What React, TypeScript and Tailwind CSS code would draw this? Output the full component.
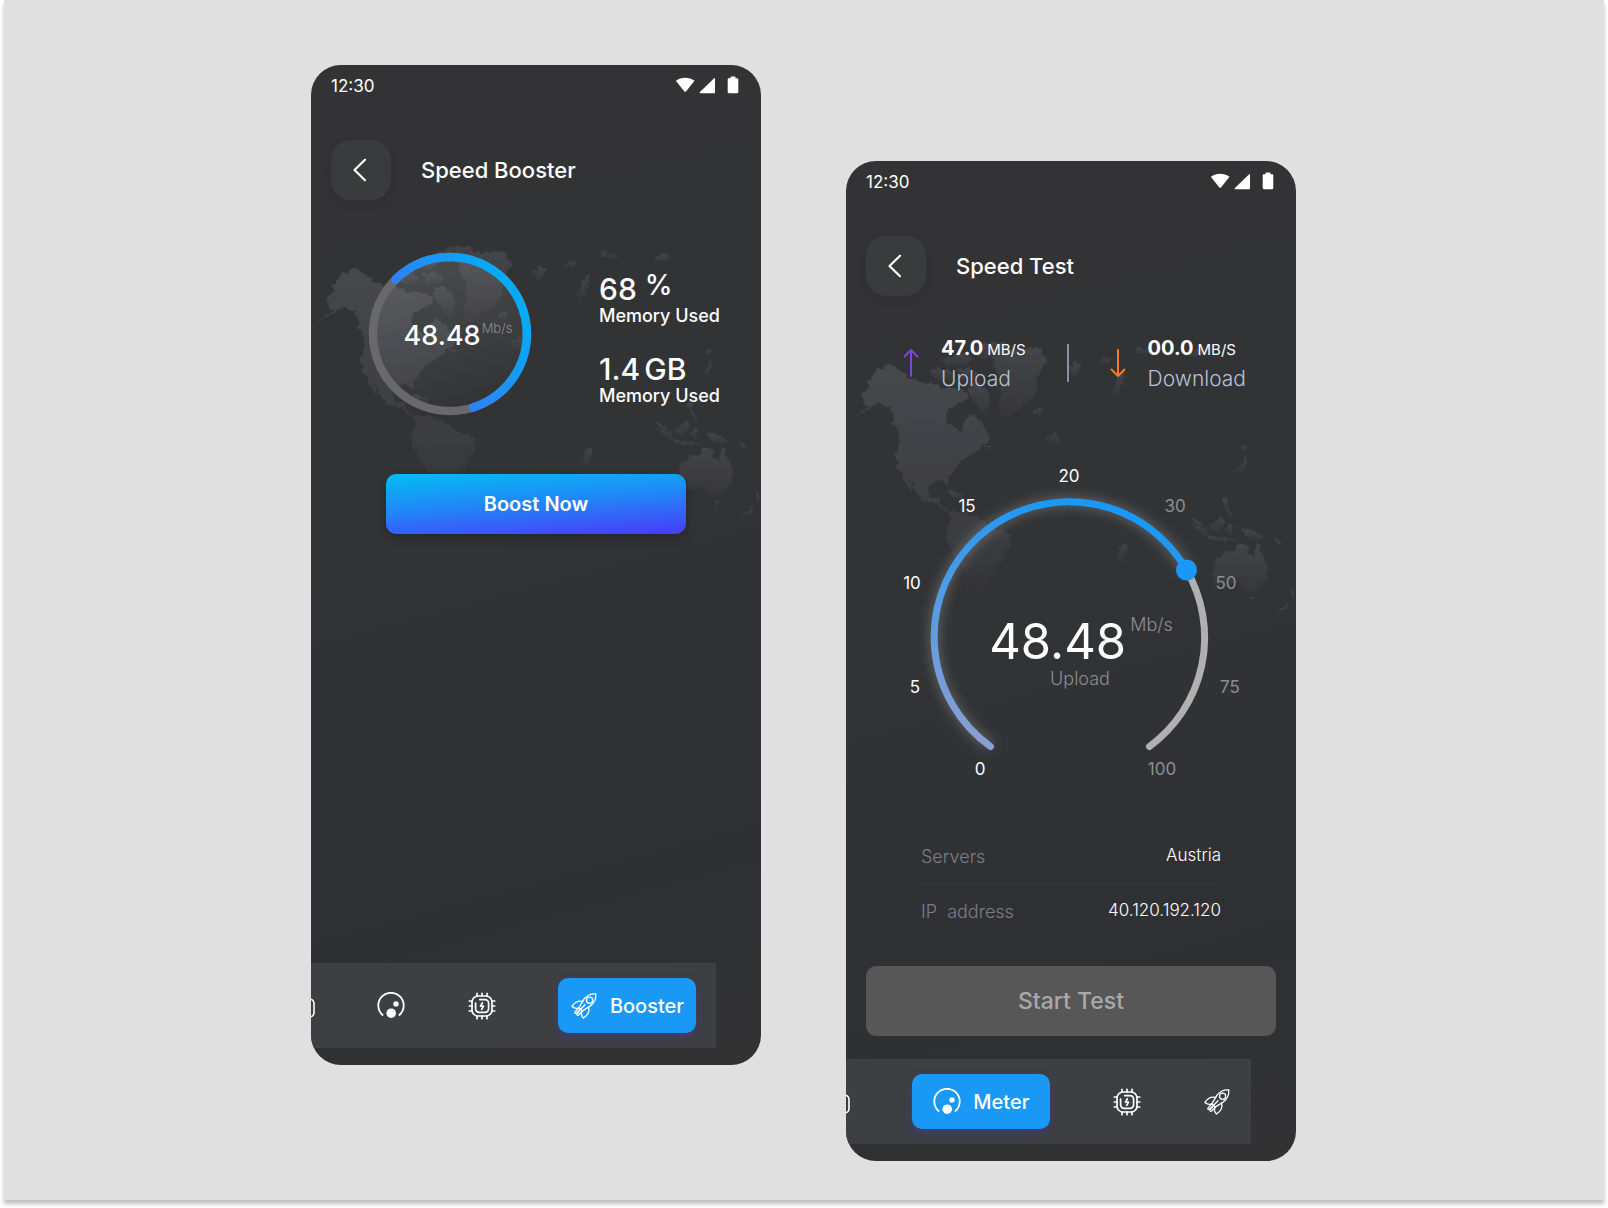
import type { ReactNode } from "react";

function WorldMap() {
  return (
    <svg
      aria-hidden="true"
      viewBox="18 0 1350 960"
      className="pointer-events-none absolute inset-x-0 top-[159px] w-full"
    >
      <defs>
        <linearGradient id="land" gradientUnits="userSpaceOnUse" x1="0" y1="130" x2="0" y2="880">
          <stop offset="0" stopColor="#45474b" />
          <stop offset="0.5" stopColor="#3e4044" />
          <stop offset="0.8" stopColor="#38393c" />
          <stop offset="1" stopColor="#323335" stopOpacity="0" />
        </linearGradient>
        <linearGradient id="isle" x1="0" y1="0" x2="0" y2="1">
          <stop offset="0" stopColor="#434549" />
          <stop offset="1" stopColor="#353639" />
        </linearGradient>
        <filter id="coast" x="-5%" y="-5%" width="110%" height="110%">
          <feTurbulence type="fractalNoise" baseFrequency="0.06" numOctaves="3" seed="4" result="n" />
          <feDisplacementMap in="SourceGraphic" in2="n" scale="22" xChannelSelector="R" yChannelSelector="G" />
        </filter>
      </defs>
      <g filter="url(#coast)">
        <path
          fill="url(#land)"
          d="M105 150L155 133L180 148L207 172L240 185L275 190L300 200L340 205L380 215L385 235L360 250L330 262L318 290L330 310L350 325L362 335L372 320L375 300L390 283L405 290L425 310L445 340L450 358L430 370L425 385L400 400L385 405L370 420L345 445L328 470L332 498L320 490L300 478L270 488L262 505L268 528L285 535L300 530L298 548L312 560L325 578L345 572L375 575L405 590L430 600L450 618L490 632L514 648L512 670L498 690L495 715L470 735L462 755L440 790L420 830L400 850L380 880L370 860L372 800L372 745L350 715L325 670L322 640L333 590L310 570L285 552L250 540L230 520L215 490L200 470L218 510L205 505L190 475L175 445L165 400L178 365L175 340L160 310L158 275L140 255L110 250L90 265L60 282L25 298L70 272L85 262L68 240L65 215L90 200L80 182L100 165Z"
        />
        <path
          fill="url(#isle)"
          d="M455 95L500 80L545 88L575 80L605 90L600 108L623 118L605 140L595 170L590 210L585 235L550 255L520 275L505 300L485 290L475 260L480 235L485 210L480 165L462 140Z"
        />
        <path fill="url(#isle)" d="M395 85L440 68L490 66L505 78L470 100L440 118L410 112Z" />
        <path fill="url(#isle)" d="M300 120L340 105L380 100L400 118L370 135L330 140Z" />
        <path fill="url(#isle)" d="M270 150L310 145L345 160L330 180L290 182Z" />
        <path fill="url(#isle)" d="M350 150L390 145L420 160L400 180L365 178Z" />
        <path fill="url(#isle)" d="M385 195L415 185L440 205L452 240L440 262L450 285L425 278L405 245L390 225Z" />
        <path fill="url(#isle)" d="M575 270L600 264L610 276L595 288L580 284Z" />
        <path fill="url(#isle)" d="M640 328L652 345L662 365L645 374L618 358L632 348Z" />
        <path fill="url(#isle)" d="M685 138L705 128L727 136L715 152L700 170L688 156Z" />
        <path fill="url(#isle)" d="M820 235L824 195L842 158L855 155L848 185L834 215Z" />
        <path fill="url(#isle)" d="M768 128L790 116L812 108L816 118L792 132Z" />
        <path fill="url(#isle)" d="M886 78L902 82L938 96L936 106L905 104L890 92Z" />
        <path fill="url(#isle)" d="M1050 98L1072 94L1096 98L1082 110L1056 110Z" />
        <path fill="url(#isle)" d="M315 512L345 516L375 530L365 538L335 526Z" />
        <path fill="url(#isle)" d="M432 372L452 372L456 388L438 388Z" />
        <path fill="url(#isle)" d="M832 718L836 690L858 668L862 690L850 720Z" />
        <path fill="url(#isle)" d="M1205 372L1226 380L1216 396L1204 388Z" />
        <path fill="url(#isle)" d="M1216 400L1222 430L1204 448L1182 458L1188 444L1206 432Z" />
        <path fill="url(#isle)" d="M1150 532L1164 540L1162 560L1182 578L1172 600L1160 584L1148 560Z" />
        <path fill="url(#isle)" d="M1052 592L1070 602L1106 640L1098 648L1074 626Z" />
        <path fill="url(#isle)" d="M1110 616L1134 600L1146 586L1154 600L1142 632L1118 634Z" />
        <path fill="url(#isle)" d="M1094 646L1140 652L1190 658L1188 666L1130 660Z" />
        <path fill="url(#isle)" d="M1160 616L1178 610L1176 640L1162 642Z" />
        <path fill="url(#isle)" d="M1202 628L1240 630L1270 650L1274 662L1240 658L1212 646Z" />
        <path fill="url(#isle)" d="M1300 652L1330 672L1328 680L1302 662Z" />
        <path
          fill="url(#isle)"
          d="M1120 722L1165 692L1190 690L1200 670L1224 678L1226 700L1242 712L1250 666L1264 700L1284 740L1276 780L1258 802L1238 822L1208 812L1190 788L1150 796L1120 806L1122 770Z"
        />
        <path fill="url(#isle)" d="M1228 832L1244 832L1238 850L1230 848Z" />
        <path fill="url(#isle)" d="M1352 802L1366 820L1364 838L1354 836Z" />
        <path fill="url(#isle)" d="M1350 844L1340 862L1312 886L1308 878L1330 858Z" />
      </g>
    </svg>
  );
}

function GaugeIcon() {
  return (
    <svg viewBox="0 0 28 28" className="size-7 shrink-0" fill="none" aria-hidden="true">
      <path d="M5.6 23A12.7 12.7 0 1 1 22.4 23" stroke="white" strokeWidth="1.8" strokeLinecap="round" />
      <circle cx="14.2" cy="21.2" r="4.8" fill="white" />
      <circle cx="19" cy="11.9" r="2.7" fill="white" />
    </svg>
  );
}

function ChipIcon() {
  return (
    <svg
      viewBox="0 0 28 28"
      className="size-7 shrink-0"
      fill="none"
      stroke="white"
      strokeWidth="1.7"
      strokeLinecap="round"
      strokeLinejoin="round"
      aria-hidden="true"
    >
      <rect x="4" y="4" width="20" height="20" rx="6" />
      <path d="M9 1.3V4M14 1.3V4M19 1.3V4M9 24v2.7M14 24v2.7M19 24v2.7M1.3 9H4M1.3 14H4M1.3 19H4M24 9h2.7M24 14h2.7M24 19h2.7" />
      <path d="M11.8 7.6H17a3.6 3.6 0 0 1 3.6 3.6v5.600a3.600 3.600 0 0 1-3.600 3.600h-5.800a3.600 3.600 0 0 1-3.600-3.600V11" />
      <path d="M14.3 10.8l-1.8 3.300h3l-1.800 3.300" />
    </svg>
  );
}

function RocketIcon() {
  return (
    <svg
      viewBox="0 0 28 28"
      className="size-7 shrink-0"
      fill="none"
      stroke="white"
      strokeWidth="1.3"
      strokeLinecap="round"
      strokeLinejoin="round"
      aria-hidden="true"
    >
      <path d="M25.8 1.9c-4.8-.4-8.900 1.500-11.800 5.300l-5.200 8.600 3.400 3.300 8.200-5.200c4.200-3 5.700-7.200 5.400-12z" />
      <circle cx="19.600" cy="8.300" r="3.100" />
      <path d="M12.800 9.300c-4.700-.900-8.200.600-10.800 5.100 2.100 1.900 4.500 2.400 6.800 1.400" />
      <path d="M18.600 15.200c1.300 4-.900 8-5.200 10.800-1.900-1.600-2.300-4.200-1.200-6.900" />
      <path d="M8.800 15.800l-3.700 4.100c-.9 1.200.2 2 1.300 1.200l4.800-4.600-4 5.300c-.8 1.300.3 2.200 1.500 1.200l3.500-3.900" />
      <path d="M11.200 16.700l3.800-3.900" />
    </svg>
  );
}

function CutOffIcon() {
  return (
    <svg viewBox="0 0 4 20" className="mt-1 h-5 w-1 shrink-0" fill="none" aria-hidden="true">
      <path d="M-4 1h2.500a4.500 4.500 0 0 1 4.500 4.500v9a4.500 4.500 0 0 1-4.500 4.500H-4" stroke="white" strokeWidth="1.600" />
    </svg>
  );
}

function StatusBar() {
  return (
    <div className="flex h-[42px] items-center justify-between pl-5 pr-[21px] text-white">
      <span className="text-[17px] leading-6">12:30</span>
      <svg viewBox="0 0 64 20" className="h-5 w-16" fill="white" aria-hidden="true">
        <path d="M-.2 4.800C4.500.600 13.800.600 18.500 4.800L10.200 15.200c-.600.700-1.400.700-2 0z" />
        <path d="M39 2.800v13.400c0 .7-.3 1-1 1H24.400c-.9 0-1.100-.6-.5-1.200L37.900 2.400c.6-.6 1.100-.4 1.100.4z" />
        <path d="M54.500 2.200V1.200c0-.5.300-.7.700-.7h3.600c.4 0 .7.200.7.700v1h1.600c.8 0 1.200.4 1.200 1.200v12.600c0 .8-.4 1.200-1.200 1.200h-8.200c-.8 0-1.200-.4-1.200-1.200V3.400c0-.8.4-1.200 1.200-1.200z" />
      </svg>
    </div>
  );
}

function Header({ title }: { title: string }) {
  return (
    <header className="mt-[33px] flex items-center gap-[30px] px-5">
      <button
        type="button"
        aria-label="Back"
        className="grid size-[60px] place-items-center rounded-[20px] bg-[#3a3b3c] shadow-[0_4px_10px_rgba(0,0,0,0.08)]"
      >
        <svg viewBox="0 0 24 24" className="size-6" fill="none" aria-hidden="true">
          <path d="M16 1.800L5.500 12 16 22.200" stroke="white" strokeWidth="2.200" strokeLinecap="round" strokeLinejoin="round" />
        </svg>
      </button>
      <h1 className="text-[22px] leading-8 font-medium text-white">{title}</h1>
    </header>
  );
}

function Phone({ title, className, children }: { title: string; className?: string; children: ReactNode }) {
  return (
    <section
      className={
        "relative flex aspect-[9/20] w-full max-w-[450px] flex-col overflow-hidden rounded-[30px] bg-[linear-gradient(165deg,#333335_0%,#323335_45%,#2f3034_80%,#323233_100%)] pb-[17px] " +
        (className ?? "")
      }
    >
      <WorldMap />
      <div className="relative flex grow flex-col">
        <StatusBar />
        <Header title={title} />
        {children}
      </div>
    </section>
  );
}

function BottomNav({ children }: { children: ReactNode }) {
  return (
    <nav className="mr-[45px] flex h-[85px] items-center justify-between bg-[#3e3f43] pr-5">
      <CutOffIcon />
      {children}
    </nav>
  );
}

function NavButton({ label, children }: { label: string; children: ReactNode }) {
  return (
    <button type="button" aria-label={label}>
      {children}
    </button>
  );
}

function ActiveNavButton({ label, children }: { label: string; children: ReactNode }) {
  return (
    <button
      type="button"
      className="flex h-[55px] w-[138px] items-center justify-center gap-3 rounded-[10px] bg-[#1a98f6] text-xl font-medium text-white shadow-[0_4px_8px_rgba(63,61,200,0.35)]"
    >
      {children}
      {label}
    </button>
  );
}

function MemoryStat({ value, unit }: { value: string; unit: ReactNode }) {
  return (
    <div>
      <p className="flex gap-1 text-3xl leading-9 font-medium">
        <span>{value}</span>
        {unit}
      </p>
      <p className="text-lg leading-[18px] font-medium">Memory Used</p>
    </div>
  );
}

function BoosterScreen() {
  return (
    <Phone title="Speed Booster">
      <div className="mt-[52px] flex items-start pl-[57px] text-white">
        <div className="relative grid size-[164px] shrink-0 place-items-center">
          <svg viewBox="0 0 164 164" className="absolute inset-0 size-full" fill="none" aria-hidden="true">
            <defs>
              <linearGradient id="disc" x1="0.3" y1="0" x2="0.6" y2="1">
                <stop offset="0" stopColor="white" stopOpacity="0.12" />
                <stop offset="1" stopColor="white" stopOpacity="0" />
              </linearGradient>
              <linearGradient id="ring" gradientUnits="userSpaceOnUse" x1="66" y1="92" x2="141" y2="46">
                <stop offset="0" stopColor="#2c82fa" />
                <stop offset="1" stopColor="#07aaf5" />
              </linearGradient>
            </defs>
            <circle cx="82" cy="82" r="77" fill="url(#disc)" stroke="#69696b" strokeWidth="8.500" />
            <path
              d="M27.500 27.500A77 77 0 1 1 105.200 155.400"
              stroke="url(#ring)"
              strokeWidth="8.500"
              strokeLinecap="round"
            />
          </svg>
          <p className="relative flex items-start gap-px pl-4 pt-1 text-[27px] leading-9 font-medium">
            48.48
            <span className="text-[13px] leading-5 font-light text-[#8c8c93]">Mb/s</span>
          </p>
        </div>
        <div className="ml-[67px] mt-[19px] flex flex-col gap-[26px]">
          <MemoryStat value="68" unit={<span className="-mt-1 pl-1 text-[28px]">%</span>} />
          <MemoryStat value="1.4" unit={<span>GB</span>} />
        </div>
      </div>
      <button
        type="button"
        className="mx-[75px] mt-[58px] h-[60px] rounded-[10px] bg-[linear-gradient(176deg,#03bdf2_0%,#1f8af7_45%,#4a3af7_100%)] text-xl font-semibold text-white shadow-[0_4px_8px_rgba(0,0,0,0.25)]"
      >
        Boost Now
      </button>
      <div className="grow" />
      <BottomNav>
        <NavButton label="Meter">
          <GaugeIcon />
        </NavButton>
        <NavButton label="Processor">
          <ChipIcon />
        </NavButton>
        <ActiveNavButton label="Booster">
          <RocketIcon />
        </ActiveNavButton>
      </BottomNav>
    </Phone>
  );
}

function SpeedStat({ icon, value, label }: { icon: ReactNode; value: string; label: string }) {
  return (
    <div className="flex items-center gap-[22px]">
      {icon}
      <div>
        <p className="flex items-baseline gap-1 text-xl leading-[30px] font-bold text-white">
          {value}
          <span className="text-[15px] font-normal">MB/S</span>
        </p>
        <p className="text-[21px] leading-7 font-light text-[#b6c1d4]">{label}</p>
      </div>
    </div>
  );
}

const ticks = [
  { label: "0", x: 134, y: 320, active: true },
  { label: "5", x: 69, y: 238, active: true },
  { label: "10", x: 66, y: 134, active: true },
  { label: "15", x: 121, y: 57, active: true },
  { label: "20", x: 223, y: 27, active: true },
  { label: "30", x: 329, y: 57, active: false },
  { label: "50", x: 380, y: 134, active: false },
  { label: "75", x: 384, y: 238, active: false },
  { label: "100", x: 316, y: 320, active: false },
];

function SpeedGauge() {
  return (
    <div className="relative mt-[62px]">
      <svg viewBox="0 0 450 324" className="w-full overflow-visible" fill="none">
        <defs>
          <linearGradient id="dial" gradientUnits="userSpaceOnUse" x1="140" y1="290" x2="215" y2="45">
            <stop offset="0" stopColor="#8a9fd4" />
            <stop offset="1" stopColor="#1a98f6" />
          </linearGradient>
          <filter id="glow" x="-20%" y="-20%" width="140%" height="140%">
            <feGaussianBlur stdDeviation="6" />
          </filter>
        </defs>
        <path
          d="M144.500 291.500A135 135 0 1 1 340.500 115"
          stroke="white"
          strokeOpacity="0.25"
          strokeWidth="9"
          filter="url(#glow)"
        />
        <path d="M340.500 115A135 135 0 0 1 303.500 291.500" stroke="#b0b0b0" strokeWidth="7" strokeLinecap="round" />
        <path d="M144.500 291.500A135 135 0 1 1 340.500 115" stroke="url(#dial)" strokeWidth="7" strokeLinecap="round" />
        <circle cx="340.500" cy="115" r="10.500" fill="#1a98f6" />
        {ticks.map((t) => (
          <text
            key={t.label}
            x={t.x}
            y={t.y}
            textAnchor="middle"
            className={t.active ? "fill-white text-[17px]" : "fill-[#8d8d96] text-[17px]"}
          >
            {t.label}
          </text>
        ))}
      </svg>
      <div className="absolute inset-x-0 top-[160px] flex flex-col items-center">
        <p className="flex items-start gap-1 pl-5 text-[49px] leading-[54px] text-white">
          48.48
          <span className="text-lg leading-5 font-light text-[#8d8d96]">Mb/s</span>
        </p>
        <p className="pl-[18px] text-lg leading-5 font-light text-[#8d8d96]">Upload</p>
      </div>
    </div>
  );
}

function MeterScreen() {
  return (
    <Phone title="Speed Test" className="mt-24">
      <div className="mt-[37px] flex items-center justify-between pl-[57px] pr-[50px]">
        <SpeedStat
          value="47.0"
          label="Upload"
          icon={
            <svg viewBox="0 0 16 30" className="h-[30px] w-4" fill="none" aria-hidden="true">
              <path d="M8 28V2M1.500 8.500L8 2l6.500 6.500" stroke="#7b46d3" strokeWidth="2" strokeLinecap="round" strokeLinejoin="round" />
            </svg>
          }
        />
        <div className="h-[38px] w-0.5 bg-[#8793a3]" />
        <SpeedStat
          value="00.0"
          label="Download"
          icon={
            <svg viewBox="0 0 16 30" className="h-[30px] w-4" fill="none" aria-hidden="true">
              <path d="M8 2v26M1.500 21.500L8 28l6.500-6.500" stroke="#f47a2a" strokeWidth="2" strokeLinecap="round" strokeLinejoin="round" />
            </svg>
          }
        />
      </div>
      <SpeedGauge />
      <dl className="mx-[75px] mt-16 text-lg leading-6 font-light">
        <div className="flex justify-between border-b border-[#38393d] pb-3.5">
          <dt className="pt-0.5 text-[#7e7e86]">Servers</dt>
          <dd className="text-[17px] text-white">Austria</dd>
        </div>
        <div className="flex justify-between pt-3.5">
          <dt className="pt-0.5 whitespace-pre text-[#7e7e86]">IP  address</dt>
          <dd className="text-[17px] text-white">40.120.192.120</dd>
        </div>
      </dl>
      <div className="grow" />
      <button
        type="button"
        className="mx-5 mb-[23px] h-[70px] rounded-[10px] bg-[#575758] text-[23px] font-medium text-[#a9a9aa]"
      >
        Start Test
      </button>
      <BottomNav>
        <ActiveNavButton label="Meter">
          <GaugeIcon />
        </ActiveNavButton>
        <NavButton label="Processor">
          <ChipIcon />
        </NavButton>
        <NavButton label="Booster">
          <RocketIcon />
        </NavButton>
      </BottomNav>
    </Phone>
  );
}

export default function App() {
  return (
    <div className="flex min-h-screen flex-col bg-white px-1 pb-2 font-['Inter','Open_Sans',sans-serif]">
      <main className="flex grow items-start justify-center gap-[85px] bg-[#e0e0e0] pt-[65px] pr-px pb-[39px] shadow-[0_4px_4px_rgba(0,0,0,0.25)]">
        <BoosterScreen />
        <MeterScreen />
      </main>
    </div>
  );
}
